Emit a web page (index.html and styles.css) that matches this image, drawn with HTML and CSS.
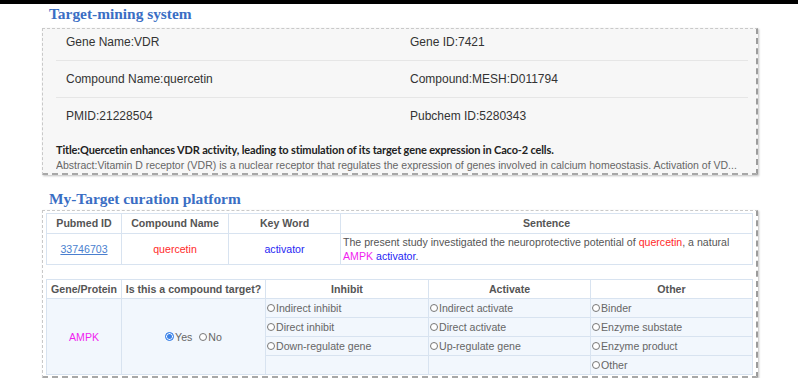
FILE: index.html
```html
<!DOCTYPE html>
<html lang="en">
<head>
    <meta charset="UTF-8">
    <title>Target-mining system</title>
    <link rel="stylesheet" href="styles.css">
</head>
<body>
<div class="topbar"></div>
<div class="wrap">
    <h2 class="section-title">Target-mining system</h2>
    <div class="panel panel-info">
        <div class="info-grid">
            <div class="info-cell first">Gene Name:VDR</div>
            <div class="info-cell first">Gene ID:7421</div>
            <div class="info-cell">Compound Name:quercetin</div>
            <div class="info-cell">Compound:MESH:D011794</div>
            <div class="info-cell last">PMID:21228504</div>
            <div class="info-cell last">Pubchem ID:5280343</div>
        </div>
        <div class="paper">
            <p class="paper-title">Title:Quercetin enhances VDR activity, leading to stimulation of its target gene expression in Caco-2 cells.</p>
            <p class="paper-abstract">Abstract:Vitamin D receptor (VDR) is a nuclear receptor that regulates the expression of genes involved in calcium homeostasis. Activation of VD...</p>
        </div>
    </div>

    <h2 class="section-title second">My-Target curation platform</h2>
    <div class="panel panel-curation">
        <table class="grid-table sentence-table">
            <colgroup>
                <col style="width:75px">
                <col style="width:107px">
                <col style="width:112px">
                <col>
            </colgroup>
            <tr>
                <th>Pubmed ID</th>
                <th>Compound Name</th>
                <th>Key Word</th>
                <th>Sentence</th>
            </tr>
            <tr>
                <td class="center"><a href="#" class="pmid">33746703</a></td>
                <td class="center red">quercetin</td>
                <td class="center blue">activator</td>
                <td class="sentence">The present study investigated the neuroprotective potential of <span class="red">quercetin</span>, a natural <span class="pink">AMPK</span> <span class="blue">activator</span>.</td>
            </tr>
        </table>

        <table class="grid-table choice-table">
            <colgroup>
                <col style="width:75px">
                <col style="width:144px">
                <col style="width:163px">
                <col style="width:162px">
                <col>
            </colgroup>
            <tr>
                <th>Gene/Protein</th>
                <th>Is this a compound target?</th>
                <th>Inhibit</th>
                <th>Activate</th>
                <th>Other</th>
            </tr>
            <tr>
                <td rowspan="4" class="center pink">AMPK</td>
                <td rowspan="4" class="center">
                    <span class="radio checked"></span>Yes
                    <span class="radio gap"></span>No
                </td>
                <td><span class="radio"></span>Indirect inhibit</td>
                <td><span class="radio"></span>Indirect activate</td>
                <td><span class="radio"></span>Binder</td>
            </tr>
            <tr>
                <td><span class="radio"></span>Direct inhibit</td>
                <td><span class="radio"></span>Direct activate</td>
                <td><span class="radio"></span>Enzyme substate</td>
            </tr>
            <tr>
                <td><span class="radio"></span>Down-regulate gene</td>
                <td><span class="radio"></span>Up-regulate gene</td>
                <td><span class="radio"></span>Enzyme product</td>
            </tr>
            <tr>
                <td></td>
                <td></td>
                <td><span class="radio"></span>Other</td>
            </tr>
        </table>
    </div>
</div>
</body>
</html>
```

FILE: styles.css
```css
body,h2,p,table,td,th{margin:0;padding:0}
body{font:12px/1.4 "Liberation Sans", Arial, sans-serif;color:#333;background:#fff;}
a{text-decoration:none}

.topbar{
    height:4px;
    background:#000;
}
.wrap{
    width:716px;
    margin:0 0 0 42px;
}
.section-title{
    font:bold 15.4px/20px "Liberation Serif", "Times New Roman", serif;
    color:#3a6ec4;
    padding-left:7px;
    margin-bottom:4px;
}
.section-title.second{
    margin-top:14px;
    margin-bottom:1px;
}

/* dashed card */
.panel{
    border:1px dashed #c9c9c9;
    border-right:2px dashed #9c9c9c;
    border-bottom:2px dashed #a8a8a8;
    box-shadow:1px 1px 2px rgba(0,0,0,.25);
}
.panel-info{
    background:#f7f7f7;
    padding:0 8px 0 13px;
}
.info-grid{
    display:grid;
    grid-template-columns:346px 1fr;
}
.info-cell{
    padding:11px 10px;
    line-height:14px;
    border-bottom:1px solid #e6e6e6;
    color:#333;
}
.info-cell.first{padding-top:6px}
.info-cell.last{border-bottom:none}
.info-cell:nth-child(even){padding-left:8px}

.paper{
    padding:8px 0 0;
}
.paper-title{
    font:bold 11px/16px Lato, "Liberation Sans", sans-serif;
    letter-spacing:-0.15px;
    color:#222;
    white-space:nowrap;
}
.paper-abstract{
    font-size:10.5px;
    line-height:15px;
    color:#666;
    white-space:nowrap;
    overflow:hidden;
}

.panel-curation{
    background:#fff;
    padding:2px 3px 1px 3px;
}
.grid-table{
    width:100%;
    border-collapse:collapse;
    table-layout:fixed;
    font-size:10.6px;
    color:#555;
}
.grid-table th,.grid-table td{
    border:1px solid #d8e3f0;
}
.grid-table th{
    font-weight:bold;
    line-height:15px;
    padding:2px 2px;
    color:#555;
    background:#fff;
}
.sentence-table td{
    line-height:14px;
    padding:1px 2px;
}
.center{text-align:center}
.sentence{color:#555}
.pmid{
    color:#4a7fcf;
    text-decoration:underline;
}
.red{color:#ff2a2a}
.blue{color:#2626f4}
.pink,.choice-table td.pink{color:#f01ef0}

.choice-table{
    margin-top:14px;
}
.choice-table th{
    line-height:14px;
}
.choice-table td{
    background:#f2f7fd;
    line-height:14px;
    padding:2px 1px;
    color:#666;
}

.radio{
    display:inline-block;
    width:6px;
    height:6px;
    border:1px solid #777;
    border-radius:50%;
    margin-right:1px;
    vertical-align:0;
    background:#fff;
}
.radio.checked{
    width:7px;
    height:7px;
    border-color:#3b82e8;
    background:#3b82e8;
    box-shadow:inset 0 0 0 1px #fff;
}
.radio.gap{margin-left:4px}
```
